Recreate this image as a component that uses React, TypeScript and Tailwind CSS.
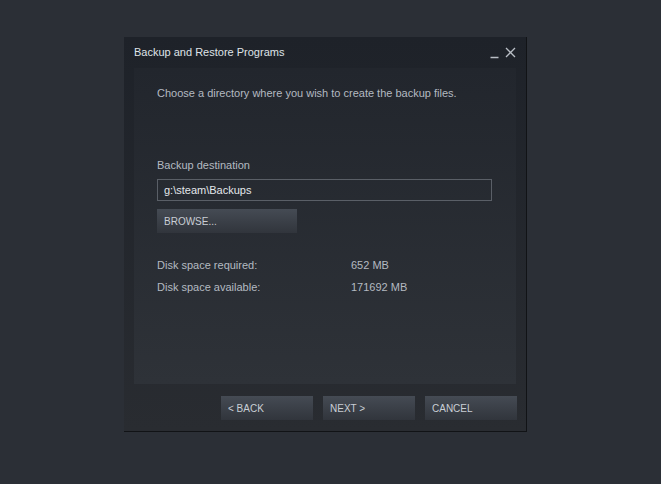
const font = { fontFamily: '"Liberation Sans", Arial, sans-serif' };

function Button({ label, className = '' }: { label: string; className?: string }) {
  return (
    <button
      className={
        'flex h-[24px] items-center bg-gradient-to-b from-[#454b54] to-[#31353c] px-[7px] text-[10px] text-[#c9ced5] ' +
        className
      }
    >
      {label}
    </button>
  );
}

export default function App() {
  return (
    <div className="flex h-[484px] w-[661px] bg-[#2b2f36] pl-[124px] pt-[37px]" style={font}>
      <div className="flex h-[395px] w-[403px] flex-col border-b border-r border-[#111316] bg-gradient-to-b from-[#1e2229] to-[#292c31]">
        <div className="flex h-[31px] items-center justify-between pl-[10px] pr-[10px]">
          <span className="text-[11px] text-[#dfe3e8]">Backup and Restore Programs</span>
          <div className="flex items-center gap-[6px] text-[#b9bec5]">
            <svg width="9" height="12" viewBox="0 0 9 12">
              <path d="M0.5 10.5H8.5" stroke="currentColor" strokeWidth="1.5" />
            </svg>
            <svg width="11" height="11" viewBox="0 0 11 11">
              <path d="M1 1L10 10M10 1L1 10" stroke="currentColor" strokeWidth="1.3" />
            </svg>
          </div>
        </div>
        <div className="mx-[10px] flex h-[316px] flex-col bg-gradient-to-b from-[#22262d] to-[#2e3238] px-[23px] pt-[17px]">
          <p className="text-[11px] text-[#b4bac1]">Choose a directory where you wish to create the backup files.</p>
          <p className="mt-[55px] text-[11px] text-[#b4bac1]">Backup destination</p>
          <div className="mt-[6px] flex h-[22px] w-[335px] items-center border border-[#5a5f67] px-[6px] text-[11px] text-[#e3e7eb]">
            g:\steam\Backups
          </div>
          <Button label="BROWSE..." className="mt-[8px] w-[140px]" />
          <div className="mt-[24px] grid grid-cols-[194px_1fr] gap-y-[5px] text-[11px] text-[#b4bac1]">
            <span>Disk space required:</span>
            <span>652 MB</span>
            <span>Disk space available:</span>
            <span>171692 MB</span>
          </div>
        </div>
        <div className="flex justify-end gap-[10px] pr-[9px] pt-[12px]">
          <Button label="< BACK" className="w-[92px]" />
          <Button label="NEXT >" className="w-[92px]" />
          <Button label="CANCEL" className="w-[92px]" />
        </div>
      </div>
    </div>
  );
}
